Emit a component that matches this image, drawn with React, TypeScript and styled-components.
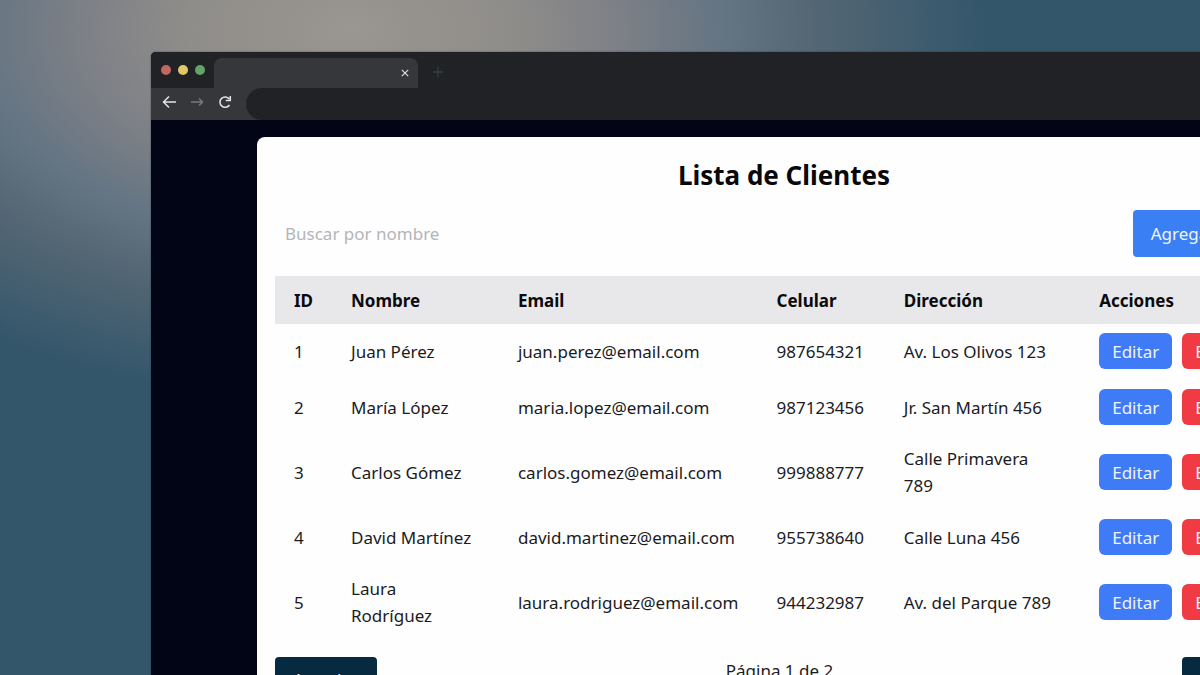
import React from "react";
import styled, { createGlobalStyle } from "styled-components";

const GlobalStyle = createGlobalStyle`
  * { box-sizing: border-box; }
  body { margin: 0; }
  body, button, input { font-family: "Noto Sans", "Open Sans", sans-serif; font-size: 17px; }
`;

const Desktop = styled.div`
  height: 100vh;
  overflow: hidden;
  padding: 52px 0 0 151px;
  background:
    radial-gradient(ellipse 650px 380px at 350px 30px, #9a9690 0%, #8f8d8a 25%, #7f8187 40%, #657583 57%, #536674 72%, #33566b 98%);
`;

const BrowserWindow = styled.div`
  display: flex;
  flex-direction: column;
  min-height: 100%;
  margin-right: -217px;
  border-radius: 5px 0 0 0;
  background: #020515;
  box-shadow: 0 0 2px rgba(20, 25, 35, 0.5);
`;

const TabStrip = styled.div`
  display: flex;
  align-items: flex-end;
  height: 36px;
  border-radius: 5px 0 0 0;
  background: #212226;
`;

const WindowDots = styled.div`
  display: flex;
  gap: 7px;
  align-self: center;
  padding: 0 9px 0 10px;
`;

const Dot = styled.span<{ $color: string }>`
  width: 10px;
  height: 10px;
  border-radius: 50%;
  background: ${(p) => p.$color};
`;

const Tab = styled.div`
  display: flex;
  align-items: center;
  justify-content: flex-end;
  width: 204px;
  height: 30px;
  padding: 0 8px;
  border-radius: 8px 8px 0 0;
  background: #36373a;
`;

const IconButton = styled.button<{ $color: string }>`
  display: flex;
  padding: 0;
  border: 0;
  background: none;
  color: ${(p) => p.$color};
`;

const NewTab = styled(IconButton)`
  margin: 0 0 10px 14px;
`;

const NavBar = styled.div`
  display: flex;
  align-items: center;
  gap: 14px;
  height: 32px;
  padding: 0 8px 0 11px;
  background: #36373a;
`;

const NavButton = styled(IconButton)`
  margin-bottom: 4px;
`;

const AddressBar = styled.input`
  flex: 1;
  height: 32px;
  border: 0;
  border-radius: 16px;
  background: #212226;
  color: #e8e8ea;
  outline: none;
`;

const Viewport = styled.main`
  flex: 1;
  padding: 17px 106px 40px;
`;

const Card = styled.section`
  padding: 18px;
  border-radius: 8px;
  background: #fefefe;
  color: #1b1b1f;
`;

const Title = styled.h1`
  margin: 0 0 15px;
  font-size: 26px;
  line-height: 40px;
  font-weight: 700;
  text-align: center;
  color: #08080a;
`;

const Toolbar = styled.div`
  display: flex;
  justify-content: space-between;
  margin-bottom: 19px;
`;

const Search = styled.input`
  width: 290px;
  padding: 0 10px;
  border: 0;
  background: transparent;
  outline: none;
  &::placeholder { color: #b4b5b9; opacity: 1; }
`;

const Button = styled.button<{ $color: string; $size?: "small" | "medium" | "large" }>`
  height: ${(p) => (p.$size === "small" ? 36 : p.$size === "medium" ? 45 : 47)}px;
  padding: 0 ${(p) => (p.$size === "small" ? 13 : 18)}px;
  border: 0;
  border-radius: ${(p) => (p.$size === "small" ? 6 : 4)}px;
  background: ${(p) => p.$color};
  color: #eef4ff;
  white-space: nowrap;
`;

const Table = styled.table`
  width: 100%;
  border-collapse: collapse;
  table-layout: fixed;
  line-height: 27px;
`;

const HeadRow = styled.tr`
  height: 48px;
  background: #e8e8eb;
`;

const Head = styled.th<{ $share: number }>`
  width: ${(p) => p.$share}%;
  padding: 0 19px;
  text-align: left;
  font-weight: 700;
  color: #0b0b0d;
`;

const Cell = styled.td`
  height: 56px;
  padding: 9px 21px 11px 19px;
`;

const Actions = styled.div`
  display: flex;
  gap: 10px;
`;

const Pagination = styled.nav`
  display: flex;
  align-items: flex-start;
  justify-content: space-between;
  margin-top: 17px;
  line-height: 27px;
`;

const columns: [string, number][] = [
  ["ID", 5.6],
  ["Nombre", 16.4],
  ["Email", 25.4],
  ["Celular", 12.5],
  ["Dirección", 19.2],
  ["Acciones", 20.9],
];

const clients = [
  { id: 1, name: "Juan Pérez", email: "juan.perez@email.com", phone: "987654321", address: "Av. Los Olivos 123" },
  { id: 2, name: "María López", email: "maria.lopez@email.com", phone: "987123456", address: "Jr. San Martín 456" },
  { id: 3, name: "Carlos Gómez", email: "carlos.gomez@email.com", phone: "999888777", address: "Calle Primavera 789" },
  { id: 4, name: "David Martínez", email: "david.martinez@email.com", phone: "955738640", address: "Calle Luna 456" },
  { id: 5, name: "Laura Rodríguez", email: "laura.rodriguez@email.com", phone: "944232987", address: "Av. del Parque 789" },
];

const Stroke = ({ d, size = 14 }: { d: string; size?: number }) => (
  <svg width={size} height={size} viewBox="0 0 14 14" fill="none" stroke="currentColor" strokeWidth="1.5" aria-hidden="true">
    <path d={d} />
  </svg>
);

export default function App() {
  return (
    <>
      <GlobalStyle />
      <Desktop>
        <BrowserWindow>
          <TabStrip>
            <WindowDots>
              <Dot $color="#c0685f" />
              <Dot $color="#e2c766" />
              <Dot $color="#62a46a" />
            </WindowDots>
            <Tab>
              <IconButton $color="#e4e4e6" aria-label="Cerrar pestaña">
                <Stroke size={10} d="M2.5 2.5 11.5 11.5M11.5 2.5 2.5 11.5" />
              </IconButton>
            </Tab>
            <NewTab $color="#35403b" aria-label="Nueva pestaña">
              <Stroke size={12} d="M7 1V13M1 7H13" />
            </NewTab>
          </TabStrip>
          <NavBar>
            <NavButton $color="#e4e4e6" aria-label="Atrás">
              <Stroke d="M14 7H2M7 1.5 1.5 7 7 12.5" />
            </NavButton>
            <NavButton $color="#77787b" aria-label="Adelante">
              <Stroke d="M1 7H12M9 3.5 12.5 7 9 10.5" />
            </NavButton>
            <NavButton $color="#e4e4e6" aria-label="Recargar">
              <Stroke d="M11.5 10A5.2 5.2 0 1 1 11.3 4M12.3 1V5.5H7.8" />
            </NavButton>
            <AddressBar aria-label="Dirección web" />
          </NavBar>
          <Viewport>
            <Card>
              <Title>Lista de Clientes</Title>
              <Toolbar>
                <Search placeholder="Buscar por nombre" aria-label="Buscar por nombre" />
                <Button $color="#3b7ff5" $size="large">Agregar Cliente</Button>
              </Toolbar>
              <Table>
                <thead>
                  <HeadRow>
                    {columns.map(([label, share]) => (
                      <Head key={label} $share={share} scope="col">{label}</Head>
                    ))}
                  </HeadRow>
                </thead>
                <tbody>
                  {clients.map((c) => (
                    <tr key={c.id}>
                      <Cell>{c.id}</Cell>
                      <Cell>{c.name}</Cell>
                      <Cell>{c.email}</Cell>
                      <Cell>{c.phone}</Cell>
                      <Cell>{c.address}</Cell>
                      <Cell>
                        <Actions>
                          <Button $color="#3f7bf6" $size="small">Editar</Button>
                          <Button $color="#f03a44" $size="small">Eliminar</Button>
                        </Actions>
                      </Cell>
                    </tr>
                  ))}
                </tbody>
              </Table>
              <Pagination aria-label="Paginación">
                <Button $color="#062b40" $size="medium">Anterior</Button>
                <span>Página 1 de 2</span>
                <Button $color="#062b40" $size="medium">Siguiente</Button>
              </Pagination>
            </Card>
          </Viewport>
        </BrowserWindow>
      </Desktop>
    </>
  );
}
